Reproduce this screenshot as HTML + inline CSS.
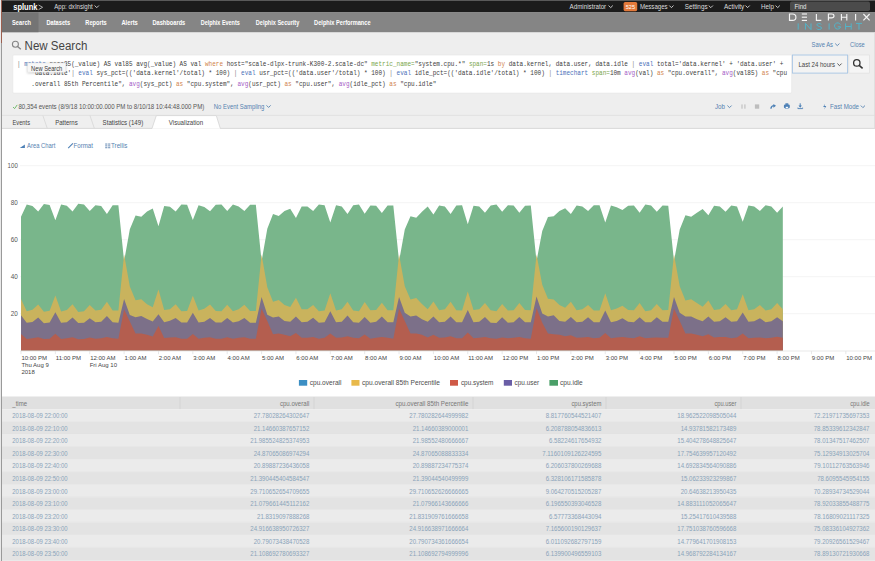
<!DOCTYPE html><html><head><meta charset="utf-8"><title>New Search | Splunk</title><style>html,body{margin:0;padding:0;background:#fff;overflow:hidden}svg{display:block}</style></head><body>
<svg width="875" height="561" viewBox="0 0 875 561" font-family='"Liberation Sans", sans-serif'>
<rect x="0.00" y="0.00" width="875.00" height="561.00" fill="#ffffff" />
<rect x="0.00" y="0.00" width="875.00" height="12.50" fill="#1c1c1c" />
<rect x="0.00" y="0.00" width="875.00" height="1.00" fill="#5a5a5a" />
<text x="13.20" y="9.90" font-size="8.6" fill="#ffffff" font-weight="bold" textLength="24.30" lengthAdjust="spacingAndGlyphs" >splunk</text>
<polyline points="38.6,5.0 42.6,7.3 38.6,9.6" fill="none" stroke="#bdbdbd" stroke-width="0.9"/>
<text x="54.30" y="8.70" font-size="6.6" fill="#dedede" textLength="38.50" lengthAdjust="spacingAndGlyphs" >App: dxInsight</text>
<polyline points="94.60,5.52 96.75,7.68 98.90,5.52" fill="none" stroke="#dedede" stroke-width="0.9"/>
<text x="569.60" y="8.70" font-size="6.6" fill="#dedede" textLength="36.60" lengthAdjust="spacingAndGlyphs" >Administrator</text>
<polyline points="608.60,5.55 610.70,7.65 612.80,5.55" fill="none" stroke="#dedede" stroke-width="0.9"/>
<rect x="623.6" y="1.9" width="13.6" height="9.3" rx="1.6" fill="#e3793a"/>
<text x="630.40" y="8.70" font-size="6.0" fill="#ffffff" text-anchor="middle" textLength="9.20" lengthAdjust="spacingAndGlyphs" >525</text>
<text x="639.90" y="8.70" font-size="6.6" fill="#dedede" textLength="27.70" lengthAdjust="spacingAndGlyphs" >Messages</text>
<polyline points="669.30,5.55 671.40,7.65 673.50,5.55" fill="none" stroke="#dedede" stroke-width="0.9"/>
<text x="684.70" y="8.70" font-size="6.6" fill="#dedede" textLength="22.90" lengthAdjust="spacingAndGlyphs" >Settings</text>
<polyline points="708.70,5.55 710.80,7.65 712.90,5.55" fill="none" stroke="#dedede" stroke-width="0.9"/>
<text x="724.10" y="8.70" font-size="6.6" fill="#dedede" textLength="20.20" lengthAdjust="spacingAndGlyphs" >Activity</text>
<polyline points="745.50,5.55 747.60,7.65 749.70,5.55" fill="none" stroke="#dedede" stroke-width="0.9"/>
<text x="761.00" y="8.70" font-size="6.6" fill="#dedede" textLength="12.90" lengthAdjust="spacingAndGlyphs" >Help</text>
<polyline points="775.60,5.55 777.70,7.65 779.80,5.55" fill="none" stroke="#dedede" stroke-width="0.9"/>
<rect x="790" y="1.6" width="80" height="9.4" rx="1.8" fill="#4b4b4b"/>
<text x="794.50" y="8.60" font-size="6.4" fill="#e6e6e6" textLength="12.00" lengthAdjust="spacingAndGlyphs" >Find</text>
<rect x="0.00" y="12.50" width="875.00" height="20.00" fill="#858585" />
<rect x="2.00" y="12.50" width="36.50" height="20.00" fill="#747474" />
<text x="12.10" y="25.10" font-size="6.6" fill="#ffffff" font-weight="bold" textLength="18.90" lengthAdjust="spacingAndGlyphs" >Search</text>
<text x="46.40" y="25.10" font-size="6.6" fill="#ffffff" font-weight="bold" textLength="23.80" lengthAdjust="spacingAndGlyphs" >Datasets</text>
<text x="85.30" y="25.10" font-size="6.6" fill="#ffffff" font-weight="bold" textLength="21.40" lengthAdjust="spacingAndGlyphs" >Reports</text>
<text x="121.40" y="25.10" font-size="6.6" fill="#ffffff" font-weight="bold" textLength="16.40" lengthAdjust="spacingAndGlyphs" >Alerts</text>
<text x="152.40" y="25.10" font-size="6.6" fill="#ffffff" font-weight="bold" textLength="32.90" lengthAdjust="spacingAndGlyphs" >Dashboards</text>
<text x="200.70" y="25.10" font-size="6.6" fill="#ffffff" font-weight="bold" textLength="39.10" lengthAdjust="spacingAndGlyphs" >Delphix Events</text>
<text x="255.80" y="25.10" font-size="6.6" fill="#ffffff" font-weight="bold" textLength="43.50" lengthAdjust="spacingAndGlyphs" >Delphix Security</text>
<text x="314.10" y="25.10" font-size="6.6" fill="#ffffff" font-weight="bold" textLength="56.50" lengthAdjust="spacingAndGlyphs" >Delphix Performance</text>
<g fill="none" stroke="#f4f4f4" stroke-width="1.15" stroke-linecap="butt">
<path d="M789.5 14.0 V20.4 H792.5 A3.4 3.2 0 0 0 792.5 14.0 Z"/>
<path d="M801.8 14.00 H807.0"/>
<path d="M801.8 17.20 H807.0"/>
<path d="M801.8 20.40 H807.0"/>
<path d="M816.4 14.0 V20.4 H821.3"/>
<path d="M828.4 20.4 V14.0 H831.5 A2.5 1.9 0 0 1 831.5 17.80 H828.4"/>
<path d="M841.4 14.0 V20.4 M846.8 14.0 V20.4 M841.4 17.20 H846.8"/>
<path d="M855.6 14.0 V20.4"/>
<path d="M863.4 14.0 L869.6 20.4 M869.6 14.0 L863.4 20.4"/>
</g>
<g fill="none" stroke="#52b4c9" stroke-width="1.0">
<path d="M798.2 23.4 V29.6"/>
<path d="M805.4 29.6 V23.4 L811.0 29.6 V23.4"/>
<path d="M821.4 24.50 C820.6 23.10 816.6 23.10 816.8 25.00 C817.0 26.60 821.8 26.20 821.6 28.10 C821.4 30.00 817.2 30.00 816.6 28.60"/>
<path d="M829.1 23.4 V29.6"/>
<path d="M840.4 24.60 A3.1 3.1 0 1 0 840.6 26.80 H837.8"/>
<path d="M845.6 23.4 V29.6 M851.2 23.4 V29.6 M845.6 26.50 H851.2"/>
<path d="M856.0 23.4 H862.0 M859.0 23.4 V29.6"/>
</g>
<rect x="2.00" y="32.50" width="873.00" height="82.70" fill="#eeeeee" />
<circle cx="15.4" cy="44.2" r="3.0" fill="none" stroke="#858585" stroke-width="1.1"/>
<line x1="17.60" y1="46.50" x2="20.80" y2="49.30" stroke="#858585" stroke-width="1.3" />
<text x="24.60" y="49.80" font-size="12" fill="#444444" textLength="62.80" lengthAdjust="spacingAndGlyphs" >New Search</text>
<text x="811.60" y="46.90" font-size="6.6" fill="#5582b0" textLength="21.40" lengthAdjust="spacingAndGlyphs" >Save As</text>
<polyline points="835.20,43.55 837.30,45.65 839.40,43.55" fill="none" stroke="#5582b0" stroke-width="0.9"/>
<text x="850.10" y="46.90" font-size="6.6" fill="#5582b0" textLength="14.60" lengthAdjust="spacingAndGlyphs" >Close</text>
<rect x="12.8" y="55.0" width="778.9" height="38.1" rx="1" fill="#ffffff" stroke="#e4e4e4" stroke-width="0.6"/>
<text x="16.90" y="65.80" font-size="7.000" font-family='"Liberation Mono", monospace' textLength="766.59" lengthAdjust="spacingAndGlyphs" xml:space="preserve"><tspan fill="#808080">| </tspan><tspan fill="#4b6fb8">mstats</tspan><tspan fill="#3c3c3c"> perc85</tspan><tspan fill="#3c3c3c">(_value) AS val85 avg(_value) AS val </tspan><tspan fill="#d0834d">where</tspan><tspan fill="#3c3c3c"> host="scale-dlpx-trunk-K300-2.scale-dc" </tspan><tspan fill="#7aa64a">metric_name=</tspan><tspan fill="#3c3c3c">"system.cpu.*" </tspan><tspan fill="#7aa64a">span=</tspan><tspan fill="#3c3c3c">1s </tspan><tspan fill="#d0834d">by</tspan><tspan fill="#3c3c3c"> data.kernel, data.user, data.idle </tspan><tspan fill="#808080">| </tspan><tspan fill="#4b6fb8">eval</tspan><tspan fill="#3c3c3c"> total='data.kernel' + 'data.user' +</tspan></text>
<text x="31.36" y="75.40" font-size="7.000" font-family='"Liberation Mono", monospace' textLength="755.74" lengthAdjust="spacingAndGlyphs" xml:space="preserve"><tspan fill="#3c3c3c">'data.idle'</tspan><tspan fill="#808080">| </tspan><tspan fill="#4b6fb8">eval</tspan><tspan fill="#3c3c3c"> sys_pct=(('data.kernel'/total) * 100) </tspan><tspan fill="#808080">| </tspan><tspan fill="#4b6fb8">eval</tspan><tspan fill="#3c3c3c"> usr_pct=(('data.user'/total) * 100) </tspan><tspan fill="#808080">| </tspan><tspan fill="#4b6fb8">eval</tspan><tspan fill="#3c3c3c"> idle_pct=(('data.idle'/total) * 100) </tspan><tspan fill="#808080">| </tspan><tspan fill="#4b6fb8">timechart</tspan><tspan fill="#3c3c3c"> </tspan><tspan fill="#7aa64a">span=</tspan><tspan fill="#3c3c3c">10m </tspan><tspan fill="#a45cc6">avg</tspan><tspan fill="#3c3c3c">(val) </tspan><tspan fill="#d0834d">as</tspan><tspan fill="#3c3c3c"> "cpu.overall", </tspan><tspan fill="#a45cc6">avg</tspan><tspan fill="#3c3c3c">(val85) </tspan><tspan fill="#d0834d">as</tspan><tspan fill="#3c3c3c"> "cpu</tspan></text>
<text x="31.36" y="85.50" font-size="7.000" font-family='"Liberation Mono", monospace' textLength="404.99" lengthAdjust="spacingAndGlyphs" xml:space="preserve"><tspan fill="#3c3c3c">.overall 85th Percentile", </tspan><tspan fill="#a45cc6">avg</tspan><tspan fill="#3c3c3c">(sys_pct) </tspan><tspan fill="#d0834d">as</tspan><tspan fill="#3c3c3c"> "cpu.system", </tspan><tspan fill="#a45cc6">avg</tspan><tspan fill="#3c3c3c">(usr_pct) </tspan><tspan fill="#d0834d">as</tspan><tspan fill="#3c3c3c"> "cpu.user", </tspan><tspan fill="#a45cc6">avg</tspan><tspan fill="#3c3c3c">(idle_pct) </tspan><tspan fill="#d0834d">as</tspan><tspan fill="#3c3c3c"> "cpu.idle"</tspan></text>
<defs><filter id="sh" x="-20%" y="-40%" width="140%" height="180%"><feDropShadow dx="0" dy="0.6" stdDeviation="0.9" flood-color="#000" flood-opacity="0.25"/></filter></defs>
<rect x="27.7" y="63.0" width="38.1" height="9.1" fill="#f7f7f7" stroke="#dedede" stroke-width="0.4" filter="url(#sh)"/>
<text x="31.10" y="70.60" font-size="6.3" fill="#383838" textLength="31.20" lengthAdjust="spacingAndGlyphs" >New Search</text>
<rect x="792.4" y="55.0" width="55.2" height="18.1" fill="#f3f3f3" stroke="#a7c5e4" stroke-width="0.9"/>
<text x="798.40" y="67.00" font-size="7.0" fill="#444444" textLength="36.70" lengthAdjust="spacingAndGlyphs" >Last 24 hours</text>
<polyline points="837.40,63.55 839.50,65.65 841.60,63.55" fill="none" stroke="#444444" stroke-width="0.9"/>
<rect x="848.9" y="55.0" width="20.6" height="18.1" fill="#f5f5f5" stroke="#dddddd" stroke-width="0.6"/>
<circle cx="856.8" cy="62.9" r="3.2" fill="none" stroke="#333333" stroke-width="1.3"/>
<line x1="859.20" y1="65.30" x2="862.60" y2="68.40" stroke="#333333" stroke-width="1.6" />
<polyline points="13.0,107.0 14.6,108.6 17.2,104.9" fill="none" stroke="#65b560" stroke-width="0.9"/>
<text x="18.40" y="109.10" font-size="6.9" fill="#555555" textLength="185.90" lengthAdjust="spacingAndGlyphs" >80,354 events (8/9/18 10:00:00.000 PM to 8/10/18 10:44:48.000 PM)</text>
<text x="213.80" y="109.10" font-size="6.9" fill="#5582b0" textLength="50.60" lengthAdjust="spacingAndGlyphs" >No Event Sampling</text>
<polyline points="266.50,105.35 268.60,107.45 270.70,105.35" fill="none" stroke="#5582b0" stroke-width="0.9"/>
<text x="715.00" y="108.60" font-size="6.5" fill="#5582b0" textLength="10.00" lengthAdjust="spacingAndGlyphs" >Job</text>
<polyline points="727.40,105.55 729.50,107.65 731.60,105.55" fill="none" stroke="#5582b0" stroke-width="0.9"/>
<rect x="741.30" y="104.40" width="1.40" height="4.30" fill="#c8c8c8" />
<rect x="744.20" y="104.40" width="1.40" height="4.30" fill="#c8c8c8" />
<rect x="754.90" y="104.40" width="4.30" height="4.30" fill="#bdbdbd" />
<path d="M770.9 108.7 C771.1 106.6 772.4 105.7 774.2 105.7" fill="none" stroke="#4d80b6" stroke-width="1.3"/>
<polygon points="773.4,103.9 776.0,105.8 773.4,107.7" fill="#4d80b6"/>
<rect x="785.4" y="103.3" width="2.9" height="1.6" fill="#4d80b6"/>
<rect x="783.9" y="104.6" width="5.9" height="3.6" rx="1.2" fill="#4d80b6"/>
<rect x="785.5" y="106.6" width="2.7" height="2.1" fill="#ffffff" stroke="#4d80b6" stroke-width="0.5"/>
<path d="M800.2 103.3 V106.4" stroke="#4d80b6" stroke-width="1.0"/>
<polygon points="798.5,105.5 801.9,105.5 800.2,107.7" fill="#4d80b6"/>
<path d="M797.9 107.6 V108.6 H802.6 V107.6" fill="none" stroke="#4d80b6" stroke-width="0.9"/>
<path d="M824.9 103.8 L823.2 107.0 H825.0 L824.2 109.6 L826.3 106.0 H824.5 Z" fill="#4d80b6"/>
<text x="830.00" y="108.60" font-size="6.5" fill="#5582b0" textLength="29.00" lengthAdjust="spacingAndGlyphs" >Fast Mode</text>
<polyline points="860.80,105.55 862.90,107.65 865.00,105.55" fill="none" stroke="#5582b0" stroke-width="0.9"/>
<rect x="2.00" y="115.60" width="873.00" height="12.60" fill="#efefef" />
<line x1="2.00" y1="115.40" x2="875.00" y2="115.40" stroke="#dadada" stroke-width="0.8" />
<line x1="2.00" y1="128.40" x2="875.00" y2="128.40" stroke="#cfcfcf" stroke-width="0.8" />
<polygon points="156.3,115.6 216.3,115.6 220.3,128.8 152.0,128.8" fill="#ffffff"/>
<polyline points="152.0,128.4 156.3,115.6 216.3,115.6 220.3,128.4" fill="none" stroke="#d0d0d0" stroke-width="0.7"/>
<line x1="42.90" y1="115.60" x2="47.20" y2="128.20" stroke="#d3d3d3" stroke-width="0.7" />
<line x1="90.00" y1="115.60" x2="94.30" y2="128.20" stroke="#d3d3d3" stroke-width="0.7" />
<text x="12.50" y="124.90" font-size="6.6" fill="#444444" textLength="17.50" lengthAdjust="spacingAndGlyphs" >Events</text>
<text x="55.20" y="124.90" font-size="6.6" fill="#444444" textLength="22.50" lengthAdjust="spacingAndGlyphs" >Patterns</text>
<text x="102.60" y="124.90" font-size="6.6" fill="#444444" textLength="40.60" lengthAdjust="spacingAndGlyphs" >Statistics (149)</text>
<text x="168.80" y="124.90" font-size="6.6" fill="#444444" textLength="34.30" lengthAdjust="spacingAndGlyphs" >Visualization</text>
<path d="M19.8 148.0 L24.9 144.6 V148.0 Z" fill="#4d80b6"/>
<text x="27.10" y="148.00" font-size="6.6" fill="#5582b0" textLength="28.20" lengthAdjust="spacingAndGlyphs" >Area Chart</text>
<path d="M68.2 148.2 L72.9 143.4" stroke="#4d80b6" stroke-width="1.1"/>
<text x="73.60" y="148.00" font-size="6.6" fill="#5582b0" textLength="19.30" lengthAdjust="spacingAndGlyphs" >Format</text>
<g fill="#8aa6c6"><rect x="105.2" y="143.4" width="2.2" height="1.3"/><rect x="108.1" y="143.4" width="2.2" height="1.3"/><rect x="105.2" y="145.2" width="2.2" height="1.3"/><rect x="108.1" y="145.2" width="2.2" height="1.3"/><rect x="105.2" y="147.0" width="2.2" height="1.3"/><rect x="108.1" y="147.0" width="2.2" height="1.3"/></g>
<text x="111.00" y="148.00" font-size="6.6" fill="#5582b0" textLength="16.40" lengthAdjust="spacingAndGlyphs" >Trellis</text>
<line x1="20.00" y1="165.70" x2="875.00" y2="165.70" stroke="#f0f0f0" stroke-width="0.8" />
<line x1="20.00" y1="202.70" x2="875.00" y2="202.70" stroke="#f0f0f0" stroke-width="0.8" />
<line x1="20.00" y1="239.70" x2="875.00" y2="239.70" stroke="#f0f0f0" stroke-width="0.8" />
<line x1="20.00" y1="276.70" x2="875.00" y2="276.70" stroke="#f0f0f0" stroke-width="0.8" />
<line x1="20.00" y1="313.70" x2="875.00" y2="313.70" stroke="#f0f0f0" stroke-width="0.8" />
<text x="17.80" y="167.90" font-size="6.7" fill="#555555" text-anchor="end" textLength="10.20" lengthAdjust="spacingAndGlyphs" >100</text>
<text x="17.80" y="204.90" font-size="6.7" fill="#555555" text-anchor="end" textLength="7.00" lengthAdjust="spacingAndGlyphs" >80</text>
<text x="17.80" y="241.90" font-size="6.7" fill="#555555" text-anchor="end" textLength="7.10" lengthAdjust="spacingAndGlyphs" >60</text>
<text x="17.80" y="278.90" font-size="6.7" fill="#555555" text-anchor="end" textLength="7.10" lengthAdjust="spacingAndGlyphs" >40</text>
<text x="17.80" y="315.90" font-size="6.7" fill="#555555" text-anchor="end" textLength="7.10" lengthAdjust="spacingAndGlyphs" >20</text>
<polygon points="21.00,350.4 21.00,216.79 26.73,204.53 32.46,206.08 38.18,211.41 43.91,204.06 49.64,204.97 55.37,220.36 61.10,204.40 66.82,205.79 72.55,211.50 78.28,203.86 84.01,204.45 89.74,210.91 95.46,205.17 101.19,206.10 106.92,214.05 112.65,205.36 118.38,205.36 124.10,261.23 129.83,229.22 135.56,215.53 141.29,216.64 147.02,211.46 152.74,208.50 158.47,226.26 164.20,205.91 169.93,206.65 175.66,211.46 181.38,204.43 187.11,204.80 192.84,219.97 198.57,205.36 204.30,207.02 210.02,211.28 215.75,204.80 221.48,204.43 227.21,211.09 232.94,204.43 238.66,206.47 244.39,211.09 250.12,204.80 255.85,204.80 261.58,261.23 267.30,228.67 273.03,214.05 278.76,215.90 284.49,210.91 290.22,208.87 295.94,217.94 301.67,206.47 307.40,206.47 313.13,210.91 318.86,204.62 324.58,205.17 330.31,222.56 336.04,205.17 341.77,206.47 347.50,214.05 353.22,205.36 358.95,204.62 364.68,213.68 370.41,205.54 376.14,205.73 381.86,212.94 387.59,205.54 393.32,205.54 399.05,261.23 404.78,229.59 410.50,216.27 416.23,217.75 421.96,211.83 427.69,206.47 433.42,214.42 439.14,205.54 444.87,206.47 450.60,214.05 456.33,205.54 462.06,205.17 467.78,224.23 473.51,205.73 479.24,206.47 484.97,212.76 490.70,205.54 496.42,204.62 502.15,211.83 507.88,205.17 513.61,205.54 519.34,212.76 525.06,205.73 530.79,205.54 536.52,261.23 542.25,231.07 547.98,217.01 553.70,216.27 559.43,210.91 565.16,208.13 570.89,214.05 576.62,205.54 582.34,206.47 588.07,210.91 593.80,205.17 599.53,205.17 605.26,222.56 610.98,205.54 616.71,207.21 622.44,209.98 628.17,205.73 633.90,205.54 639.62,212.76 645.35,204.62 651.08,205.54 656.81,211.83 662.54,205.54 668.26,205.73 673.99,261.23 679.72,229.59 685.45,215.35 691.18,216.64 696.90,212.76 702.63,209.06 708.36,215.35 714.09,205.73 719.82,206.47 725.54,211.83 731.27,205.54 737.00,206.47 742.73,221.64 748.46,205.54 754.18,206.47 759.91,210.91 765.64,205.17 771.37,206.47 777.10,212.76 782.82,206.47 782.82,350.4" fill="#79b68b"/>
<polygon points="21.00,350.4 21.00,299.01 26.73,311.27 32.46,309.72 38.18,304.39 43.91,311.73 49.64,310.83 55.37,295.44 61.10,311.40 66.82,310.01 72.55,304.30 78.28,311.94 84.01,311.35 89.74,304.89 95.46,310.62 101.19,309.70 106.92,301.75 112.65,310.44 118.38,310.44 124.10,254.57 129.83,286.57 135.56,300.26 141.29,299.15 147.02,304.33 152.74,307.29 158.47,289.53 164.20,309.88 169.93,309.14 175.66,304.33 181.38,311.36 187.11,311.00 192.84,295.82 198.57,310.44 204.30,308.77 210.02,304.52 215.75,311.00 221.48,311.36 227.21,304.70 232.94,311.36 238.66,309.33 244.39,304.70 250.12,311.00 255.85,311.00 261.58,254.57 267.30,287.13 273.03,301.75 278.76,299.89 284.49,304.89 290.22,306.92 295.94,297.86 301.67,309.33 307.40,309.33 313.13,304.89 318.86,311.18 324.58,310.62 330.31,293.23 336.04,310.62 341.77,309.33 347.50,301.75 353.22,310.44 358.95,311.18 364.68,302.11 370.41,310.25 376.14,310.07 381.86,302.85 387.59,310.25 393.32,310.25 399.05,254.57 404.78,286.20 410.50,299.52 416.23,298.04 421.96,303.96 427.69,309.33 433.42,301.38 439.14,310.25 444.87,309.33 450.60,301.75 456.33,310.25 462.06,310.62 467.78,291.57 473.51,310.07 479.24,309.33 484.97,303.04 490.70,310.25 496.42,311.18 502.15,303.96 507.88,310.62 513.61,310.25 519.34,303.04 525.06,310.07 530.79,310.25 536.52,254.57 542.25,284.72 547.98,298.78 553.70,299.52 559.43,304.89 565.16,307.66 570.89,301.75 576.62,310.25 582.34,309.33 588.07,304.89 593.80,310.62 599.53,310.62 605.26,293.23 610.98,310.25 616.71,308.59 622.44,305.81 628.17,310.07 633.90,310.25 639.62,303.04 645.35,311.18 651.08,310.25 656.81,303.96 662.54,310.25 668.26,310.07 673.99,254.57 679.72,286.20 685.45,300.45 691.18,299.15 696.90,303.04 702.63,306.74 708.36,300.45 714.09,310.07 719.82,309.33 725.54,303.96 731.27,310.25 737.00,309.33 742.73,294.16 748.46,310.25 754.18,309.33 759.91,304.89 765.64,310.62 771.37,309.33 777.10,303.04 782.82,309.33 782.82,350.4" fill="#c9b35d"/>
<polygon points="21.00,350.4 21.00,315.32 26.73,322.76 32.46,321.91 38.18,317.56 43.91,323.22 49.64,322.54 55.37,312.20 61.10,322.87 66.82,322.19 72.55,317.56 78.28,323.06 84.01,322.71 89.74,318.21 95.46,322.28 101.19,321.72 106.92,315.99 112.65,322.28 118.38,322.65 124.10,298.97 129.83,315.06 135.56,317.28 141.29,315.99 147.02,318.95 152.74,321.54 158.47,314.32 164.20,322.28 169.93,320.80 175.66,318.02 181.38,322.46 187.11,322.46 192.84,312.84 198.57,322.46 204.30,321.72 210.02,318.02 215.75,322.46 221.48,322.46 227.21,318.02 232.94,322.46 238.66,321.35 244.39,318.02 250.12,322.83 255.85,322.83 261.58,296.93 267.30,314.69 273.03,317.47 278.76,316.54 284.49,320.98 290.22,321.72 295.94,316.54 301.67,322.28 307.40,321.72 313.13,317.65 318.86,322.65 324.58,322.28 330.31,311.18 336.04,322.28 341.77,321.72 347.50,315.62 353.22,322.28 358.95,322.65 364.68,316.91 370.41,322.65 376.14,321.72 381.86,316.54 387.59,322.28 393.32,322.28 399.05,296.93 404.78,312.84 410.50,316.54 416.23,315.62 421.96,319.13 427.69,321.72 433.42,316.54 439.14,322.28 444.87,321.72 450.60,316.54 456.33,322.28 462.06,322.28 467.78,310.07 473.51,322.28 479.24,321.72 484.97,316.91 490.70,322.65 496.42,323.02 502.15,317.28 507.88,322.65 513.61,322.28 519.34,316.91 525.06,322.28 530.79,322.28 536.52,296.38 542.25,313.40 547.98,316.54 553.70,315.25 559.43,320.98 565.16,321.72 570.89,316.91 576.62,322.28 582.34,321.72 588.07,317.28 593.80,322.28 599.53,322.28 605.26,310.62 610.98,322.28 616.71,320.98 622.44,318.21 628.17,321.72 633.90,322.28 639.62,317.28 645.35,322.28 651.08,322.28 656.81,317.28 662.54,321.72 668.26,321.72 673.99,296.93 679.72,312.84 685.45,316.54 691.18,316.54 696.90,319.13 702.63,321.35 708.36,316.54 714.09,321.72 719.82,321.35 725.54,317.28 731.27,321.72 737.00,321.35 742.73,312.47 748.46,321.72 754.18,321.35 759.91,318.21 765.64,322.28 771.37,321.35 777.10,317.28 782.82,321.35 782.82,350.4" fill="#7c7089"/>
<polygon points="21.00,350.4 21.00,334.08 26.73,338.91 32.46,338.23 38.18,337.23 43.91,338.91 49.64,338.69 55.37,333.64 61.10,338.93 66.82,338.23 72.55,337.14 78.28,339.28 84.01,339.04 89.74,337.45 95.46,338.75 101.19,338.19 106.92,337.08 112.65,338.19 118.38,338.75 124.10,309.33 129.83,321.54 135.56,333.38 141.29,333.38 147.02,334.67 152.74,336.52 158.47,325.98 164.20,338.00 169.93,337.45 175.66,337.26 181.38,338.75 187.11,338.75 192.84,334.12 198.57,338.75 204.30,337.82 210.02,337.26 215.75,338.75 221.48,338.75 227.21,337.26 232.94,338.75 238.66,337.82 244.39,337.26 250.12,338.75 255.85,338.75 261.58,308.59 267.30,320.98 273.03,334.30 278.76,333.38 284.49,334.86 290.22,336.15 295.94,333.01 301.67,337.82 307.40,337.82 313.13,337.08 318.86,338.75 324.58,337.82 330.31,333.38 336.04,337.82 341.77,337.45 347.50,336.15 353.22,337.82 358.95,338.19 364.68,334.49 370.41,338.75 376.14,337.82 381.86,337.08 387.59,337.82 393.32,338.75 399.05,308.59 404.78,320.98 410.50,333.38 416.23,333.38 421.96,334.86 427.69,337.45 433.42,334.86 439.14,337.82 444.87,337.45 450.60,336.15 456.33,338.19 462.06,338.19 467.78,332.45 473.51,338.19 479.24,337.82 484.97,337.08 490.70,338.19 496.42,338.75 502.15,337.45 507.88,338.19 513.61,337.82 519.34,337.08 525.06,338.19 530.79,338.75 536.52,308.03 542.25,322.65 547.98,333.38 553.70,334.30 559.43,334.86 565.16,336.15 570.89,335.23 576.62,337.82 582.34,337.45 588.07,337.08 593.80,338.19 599.53,337.82 605.26,333.01 610.98,338.19 616.71,337.45 622.44,337.08 628.17,337.82 633.90,338.19 639.62,336.15 645.35,338.19 651.08,337.82 656.81,337.45 662.54,337.82 668.26,337.82 673.99,308.40 679.72,320.98 685.45,333.38 691.18,333.38 696.90,334.86 702.63,336.15 708.36,334.30 714.09,337.45 719.82,337.08 725.54,337.08 731.27,338.19 737.00,337.45 742.73,333.38 748.46,338.19 754.18,337.82 759.91,337.45 765.64,338.19 771.37,337.82 777.10,336.71 782.82,337.82 782.82,350.4" fill="#b45e4f"/>
<line x1="20.00" y1="351.00" x2="875.00" y2="351.00" stroke="#e3e3e3" stroke-width="0.8" />
<line x1="21.00" y1="351.20" x2="21.00" y2="354.20" stroke="#d8d8d8" stroke-width="0.6" />
<text x="21.40" y="360.40" font-size="6.0" fill="#444444" >10:00 PM</text>
<line x1="55.37" y1="351.20" x2="55.37" y2="354.20" stroke="#d8d8d8" stroke-width="0.6" />
<text x="55.77" y="360.40" font-size="6.0" fill="#444444" >11:00 PM</text>
<line x1="89.74" y1="351.20" x2="89.74" y2="354.20" stroke="#d8d8d8" stroke-width="0.6" />
<text x="90.14" y="360.40" font-size="6.0" fill="#444444" >12:00 AM</text>
<line x1="124.10" y1="351.20" x2="124.10" y2="354.20" stroke="#d8d8d8" stroke-width="0.6" />
<text x="124.50" y="360.40" font-size="6.0" fill="#444444" >1:00 AM</text>
<line x1="158.47" y1="351.20" x2="158.47" y2="354.20" stroke="#d8d8d8" stroke-width="0.6" />
<text x="158.87" y="360.40" font-size="6.0" fill="#444444" >2:00 AM</text>
<line x1="192.84" y1="351.20" x2="192.84" y2="354.20" stroke="#d8d8d8" stroke-width="0.6" />
<text x="193.24" y="360.40" font-size="6.0" fill="#444444" >3:00 AM</text>
<line x1="227.21" y1="351.20" x2="227.21" y2="354.20" stroke="#d8d8d8" stroke-width="0.6" />
<text x="227.61" y="360.40" font-size="6.0" fill="#444444" >4:00 AM</text>
<line x1="261.58" y1="351.20" x2="261.58" y2="354.20" stroke="#d8d8d8" stroke-width="0.6" />
<text x="261.98" y="360.40" font-size="6.0" fill="#444444" >5:00 AM</text>
<line x1="295.94" y1="351.20" x2="295.94" y2="354.20" stroke="#d8d8d8" stroke-width="0.6" />
<text x="296.34" y="360.40" font-size="6.0" fill="#444444" >6:00 AM</text>
<line x1="330.31" y1="351.20" x2="330.31" y2="354.20" stroke="#d8d8d8" stroke-width="0.6" />
<text x="330.71" y="360.40" font-size="6.0" fill="#444444" >7:00 AM</text>
<line x1="364.68" y1="351.20" x2="364.68" y2="354.20" stroke="#d8d8d8" stroke-width="0.6" />
<text x="365.08" y="360.40" font-size="6.0" fill="#444444" >8:00 AM</text>
<line x1="399.05" y1="351.20" x2="399.05" y2="354.20" stroke="#d8d8d8" stroke-width="0.6" />
<text x="399.45" y="360.40" font-size="6.0" fill="#444444" >9:00 AM</text>
<line x1="433.42" y1="351.20" x2="433.42" y2="354.20" stroke="#d8d8d8" stroke-width="0.6" />
<text x="433.82" y="360.40" font-size="6.0" fill="#444444" >10:00 AM</text>
<line x1="467.78" y1="351.20" x2="467.78" y2="354.20" stroke="#d8d8d8" stroke-width="0.6" />
<text x="468.18" y="360.40" font-size="6.0" fill="#444444" >11:00 AM</text>
<line x1="502.15" y1="351.20" x2="502.15" y2="354.20" stroke="#d8d8d8" stroke-width="0.6" />
<text x="502.55" y="360.40" font-size="6.0" fill="#444444" >12:00 PM</text>
<line x1="536.52" y1="351.20" x2="536.52" y2="354.20" stroke="#d8d8d8" stroke-width="0.6" />
<text x="536.92" y="360.40" font-size="6.0" fill="#444444" >1:00 PM</text>
<line x1="570.89" y1="351.20" x2="570.89" y2="354.20" stroke="#d8d8d8" stroke-width="0.6" />
<text x="571.29" y="360.40" font-size="6.0" fill="#444444" >2:00 PM</text>
<line x1="605.26" y1="351.20" x2="605.26" y2="354.20" stroke="#d8d8d8" stroke-width="0.6" />
<text x="605.66" y="360.40" font-size="6.0" fill="#444444" >3:00 PM</text>
<line x1="639.62" y1="351.20" x2="639.62" y2="354.20" stroke="#d8d8d8" stroke-width="0.6" />
<text x="640.02" y="360.40" font-size="6.0" fill="#444444" >4:00 PM</text>
<line x1="673.99" y1="351.20" x2="673.99" y2="354.20" stroke="#d8d8d8" stroke-width="0.6" />
<text x="674.39" y="360.40" font-size="6.0" fill="#444444" >5:00 PM</text>
<line x1="708.36" y1="351.20" x2="708.36" y2="354.20" stroke="#d8d8d8" stroke-width="0.6" />
<text x="708.76" y="360.40" font-size="6.0" fill="#444444" >6:00 PM</text>
<line x1="742.73" y1="351.20" x2="742.73" y2="354.20" stroke="#d8d8d8" stroke-width="0.6" />
<text x="743.13" y="360.40" font-size="6.0" fill="#444444" >7:00 PM</text>
<line x1="777.10" y1="351.20" x2="777.10" y2="354.20" stroke="#d8d8d8" stroke-width="0.6" />
<text x="777.50" y="360.40" font-size="6.0" fill="#444444" >8:00 PM</text>
<line x1="811.46" y1="351.20" x2="811.46" y2="354.20" stroke="#d8d8d8" stroke-width="0.6" />
<text x="811.86" y="360.40" font-size="6.0" fill="#444444" >9:00 PM</text>
<line x1="845.83" y1="351.20" x2="845.83" y2="354.20" stroke="#d8d8d8" stroke-width="0.6" />
<text x="846.23" y="360.40" font-size="6.0" fill="#444444" >10:00 PM</text>
<text x="21.40" y="366.70" font-size="6.0" fill="#444444" >Thu Aug 9</text>
<text x="21.40" y="374.00" font-size="6.0" fill="#444444" >2018</text>
<text x="89.70" y="366.70" font-size="6.0" fill="#444444" >Fri Aug 10</text>
<rect x="298.90" y="380.00" width="8.30" height="5.70" fill="#3c8fc4" />
<text x="309.70" y="385.00" font-size="6.3" fill="#4d4d4d" textLength="31.80" lengthAdjust="spacingAndGlyphs" >cpu.overall</text>
<rect x="351.40" y="380.00" width="8.10" height="5.70" fill="#e8b94b" />
<text x="362.00" y="385.00" font-size="6.3" fill="#4d4d4d" textLength="78.00" lengthAdjust="spacingAndGlyphs" >cpu.overall 85th Percentile</text>
<rect x="450.00" y="380.00" width="8.00" height="5.70" fill="#cf5a47" />
<text x="460.90" y="385.00" font-size="6.3" fill="#4d4d4d" textLength="32.60" lengthAdjust="spacingAndGlyphs" >cpu.system</text>
<rect x="503.80" y="380.00" width="8.20" height="5.70" fill="#6a5ea6" />
<text x="514.60" y="385.00" font-size="6.3" fill="#4d4d4d" textLength="24.50" lengthAdjust="spacingAndGlyphs" >cpu.user</text>
<rect x="549.40" y="380.00" width="8.60" height="5.70" fill="#4a9f68" />
<text x="560.00" y="385.00" font-size="6.3" fill="#4d4d4d" textLength="22.70" lengthAdjust="spacingAndGlyphs" >cpu.idle</text>
<rect x="2.00" y="396.80" width="873.00" height="12.50" fill="#e0e0e0" />
<line x1="2.00" y1="396.90" x2="875.00" y2="396.90" stroke="#dedede" stroke-width="0.6" />
<line x1="180.00" y1="397.00" x2="180.00" y2="409.30" stroke="#cfcfcf" stroke-width="0.7" />
<line x1="314.00" y1="397.00" x2="314.00" y2="409.30" stroke="#cfcfcf" stroke-width="0.7" />
<line x1="473.00" y1="397.00" x2="473.00" y2="409.30" stroke="#cfcfcf" stroke-width="0.7" />
<line x1="606.00" y1="397.00" x2="606.00" y2="409.30" stroke="#cfcfcf" stroke-width="0.7" />
<line x1="741.00" y1="397.00" x2="741.00" y2="409.30" stroke="#cfcfcf" stroke-width="0.7" />
<text x="12.30" y="406.00" font-size="6.4" fill="#777777" textLength="14.70" lengthAdjust="spacingAndGlyphs" >_time</text>
<text x="309.40" y="406.00" font-size="6.4" fill="#777777" text-anchor="end" textLength="29.50" lengthAdjust="spacingAndGlyphs" >cpu.overall</text>
<text x="468.40" y="406.00" font-size="6.4" fill="#777777" text-anchor="end" textLength="73.00" lengthAdjust="spacingAndGlyphs" >cpu.overall 85th Percentile</text>
<text x="601.40" y="406.00" font-size="6.4" fill="#777777" text-anchor="end" textLength="30.00" lengthAdjust="spacingAndGlyphs" >cpu.system</text>
<text x="736.40" y="406.00" font-size="6.4" fill="#777777" text-anchor="end" textLength="22.00" lengthAdjust="spacingAndGlyphs" >cpu.user</text>
<text x="869.70" y="406.00" font-size="6.4" fill="#777777" text-anchor="end" textLength="19.50" lengthAdjust="spacingAndGlyphs" >cpu.idle</text>
<rect x="2.00" y="559.90" width="873.00" height="1.10" fill="#ebebeb" />
<rect x="2.00" y="409.30" width="873.00" height="12.55" fill="#ebebeb" />
<line x1="2.00" y1="421.85" x2="875.00" y2="421.85" stroke="#dcdcdc" stroke-width="0.4" />
<text x="12.30" y="418.20" font-size="6.6" fill="#8aa3ba" textLength="55.30" lengthAdjust="spacingAndGlyphs" >2018-08-09 22:00:00</text>
<text x="309.40" y="418.20" font-size="6.6" fill="#8aa3ba" text-anchor="end" textLength="55.76" lengthAdjust="spacingAndGlyphs" >27.78028264302647</text>
<text x="468.40" y="418.20" font-size="6.6" fill="#8aa3ba" text-anchor="end" textLength="59.14" lengthAdjust="spacingAndGlyphs" >27.780282644999982</text>
<text x="601.40" y="418.20" font-size="6.6" fill="#8aa3ba" text-anchor="end" textLength="55.76" lengthAdjust="spacingAndGlyphs" >8.817760544521407</text>
<text x="736.40" y="418.20" font-size="6.6" fill="#8aa3ba" text-anchor="end" textLength="59.14" lengthAdjust="spacingAndGlyphs" >18.962522098505044</text>
<text x="869.50" y="418.20" font-size="6.6" fill="#8aa3ba" text-anchor="end" textLength="55.76" lengthAdjust="spacingAndGlyphs" >72.21971735697353</text>
<rect x="2.00" y="421.85" width="873.00" height="12.55" fill="#e3e3e3" />
<line x1="2.00" y1="434.40" x2="875.00" y2="434.40" stroke="#dcdcdc" stroke-width="0.4" />
<text x="12.30" y="430.75" font-size="6.6" fill="#8aa3ba" textLength="55.30" lengthAdjust="spacingAndGlyphs" >2018-08-09 22:10:00</text>
<text x="309.40" y="430.75" font-size="6.6" fill="#8aa3ba" text-anchor="end" textLength="55.76" lengthAdjust="spacingAndGlyphs" >21.14660387657152</text>
<text x="468.40" y="430.75" font-size="6.6" fill="#8aa3ba" text-anchor="end" textLength="55.76" lengthAdjust="spacingAndGlyphs" >21.14660389000001</text>
<text x="601.40" y="430.75" font-size="6.6" fill="#8aa3ba" text-anchor="end" textLength="55.76" lengthAdjust="spacingAndGlyphs" >6.208788054836613</text>
<text x="736.40" y="430.75" font-size="6.6" fill="#8aa3ba" text-anchor="end" textLength="55.76" lengthAdjust="spacingAndGlyphs" >14.93781582173489</text>
<text x="869.50" y="430.75" font-size="6.6" fill="#8aa3ba" text-anchor="end" textLength="55.76" lengthAdjust="spacingAndGlyphs" >78.85339612342847</text>
<rect x="2.00" y="434.40" width="873.00" height="12.55" fill="#ebebeb" />
<line x1="2.00" y1="446.95" x2="875.00" y2="446.95" stroke="#dcdcdc" stroke-width="0.4" />
<text x="12.30" y="443.30" font-size="6.6" fill="#8aa3ba" textLength="55.30" lengthAdjust="spacingAndGlyphs" >2018-08-09 22:20:00</text>
<text x="309.40" y="443.30" font-size="6.6" fill="#8aa3ba" text-anchor="end" textLength="59.14" lengthAdjust="spacingAndGlyphs" >21.985524825374953</text>
<text x="468.40" y="443.30" font-size="6.6" fill="#8aa3ba" text-anchor="end" textLength="55.76" lengthAdjust="spacingAndGlyphs" >21.98552480666667</text>
<text x="601.40" y="443.30" font-size="6.6" fill="#8aa3ba" text-anchor="end" textLength="52.37" lengthAdjust="spacingAndGlyphs" >6.58224617654932</text>
<text x="736.40" y="443.30" font-size="6.6" fill="#8aa3ba" text-anchor="end" textLength="59.14" lengthAdjust="spacingAndGlyphs" >15.404278648825647</text>
<text x="869.50" y="443.30" font-size="6.6" fill="#8aa3ba" text-anchor="end" textLength="55.76" lengthAdjust="spacingAndGlyphs" >78.01347517462507</text>
<rect x="2.00" y="446.95" width="873.00" height="12.55" fill="#e3e3e3" />
<line x1="2.00" y1="459.50" x2="875.00" y2="459.50" stroke="#dcdcdc" stroke-width="0.4" />
<text x="12.30" y="455.85" font-size="6.6" fill="#8aa3ba" textLength="55.30" lengthAdjust="spacingAndGlyphs" >2018-08-09 22:30:00</text>
<text x="309.40" y="455.85" font-size="6.6" fill="#8aa3ba" text-anchor="end" textLength="55.76" lengthAdjust="spacingAndGlyphs" >24.87065086974294</text>
<text x="468.40" y="455.85" font-size="6.6" fill="#8aa3ba" text-anchor="end" textLength="55.76" lengthAdjust="spacingAndGlyphs" >24.87065088833334</text>
<text x="601.40" y="455.85" font-size="6.6" fill="#8aa3ba" text-anchor="end" textLength="59.14" lengthAdjust="spacingAndGlyphs" >7.1160109126224595</text>
<text x="736.40" y="455.85" font-size="6.6" fill="#8aa3ba" text-anchor="end" textLength="59.14" lengthAdjust="spacingAndGlyphs" >17.754639957120492</text>
<text x="869.50" y="455.85" font-size="6.6" fill="#8aa3ba" text-anchor="end" textLength="55.76" lengthAdjust="spacingAndGlyphs" >75.12934913025704</text>
<rect x="2.00" y="459.50" width="873.00" height="12.55" fill="#ebebeb" />
<line x1="2.00" y1="472.05" x2="875.00" y2="472.05" stroke="#dcdcdc" stroke-width="0.4" />
<text x="12.30" y="468.40" font-size="6.6" fill="#8aa3ba" textLength="55.30" lengthAdjust="spacingAndGlyphs" >2018-08-09 22:40:00</text>
<text x="309.40" y="468.40" font-size="6.6" fill="#8aa3ba" text-anchor="end" textLength="55.76" lengthAdjust="spacingAndGlyphs" >20.89887236436058</text>
<text x="468.40" y="468.40" font-size="6.6" fill="#8aa3ba" text-anchor="end" textLength="55.76" lengthAdjust="spacingAndGlyphs" >20.89887234775374</text>
<text x="601.40" y="468.40" font-size="6.6" fill="#8aa3ba" text-anchor="end" textLength="55.76" lengthAdjust="spacingAndGlyphs" >6.206037800269688</text>
<text x="736.40" y="468.40" font-size="6.6" fill="#8aa3ba" text-anchor="end" textLength="59.14" lengthAdjust="spacingAndGlyphs" >14.692834564090886</text>
<text x="869.50" y="468.40" font-size="6.6" fill="#8aa3ba" text-anchor="end" textLength="55.76" lengthAdjust="spacingAndGlyphs" >79.10112763563946</text>
<rect x="2.00" y="472.05" width="873.00" height="12.55" fill="#e3e3e3" />
<line x1="2.00" y1="484.60" x2="875.00" y2="484.60" stroke="#dcdcdc" stroke-width="0.4" />
<text x="12.30" y="480.95" font-size="6.6" fill="#8aa3ba" textLength="55.30" lengthAdjust="spacingAndGlyphs" >2018-08-09 22:50:00</text>
<text x="309.40" y="480.95" font-size="6.6" fill="#8aa3ba" text-anchor="end" textLength="59.14" lengthAdjust="spacingAndGlyphs" >21.390445404584547</text>
<text x="468.40" y="480.95" font-size="6.6" fill="#8aa3ba" text-anchor="end" textLength="55.76" lengthAdjust="spacingAndGlyphs" >21.39044540499999</text>
<text x="601.40" y="480.95" font-size="6.6" fill="#8aa3ba" text-anchor="end" textLength="55.76" lengthAdjust="spacingAndGlyphs" >6.328106171585878</text>
<text x="736.40" y="480.95" font-size="6.6" fill="#8aa3ba" text-anchor="end" textLength="55.76" lengthAdjust="spacingAndGlyphs" >15.06233923299867</text>
<text x="869.50" y="480.95" font-size="6.6" fill="#8aa3ba" text-anchor="end" textLength="52.37" lengthAdjust="spacingAndGlyphs" >78.6095545954155</text>
<rect x="2.00" y="484.60" width="873.00" height="12.55" fill="#ebebeb" />
<line x1="2.00" y1="497.15" x2="875.00" y2="497.15" stroke="#dcdcdc" stroke-width="0.4" />
<text x="12.30" y="493.50" font-size="6.6" fill="#8aa3ba" textLength="55.30" lengthAdjust="spacingAndGlyphs" >2018-08-09 23:00:00</text>
<text x="309.40" y="493.50" font-size="6.6" fill="#8aa3ba" text-anchor="end" textLength="59.14" lengthAdjust="spacingAndGlyphs" >29.710652654709655</text>
<text x="468.40" y="493.50" font-size="6.6" fill="#8aa3ba" text-anchor="end" textLength="59.14" lengthAdjust="spacingAndGlyphs" >29.710652626666665</text>
<text x="601.40" y="493.50" font-size="6.6" fill="#8aa3ba" text-anchor="end" textLength="55.76" lengthAdjust="spacingAndGlyphs" >9.064270515205287</text>
<text x="736.40" y="493.50" font-size="6.6" fill="#8aa3ba" text-anchor="end" textLength="55.76" lengthAdjust="spacingAndGlyphs" >20.64638213950435</text>
<text x="869.50" y="493.50" font-size="6.6" fill="#8aa3ba" text-anchor="end" textLength="55.76" lengthAdjust="spacingAndGlyphs" >70.28934734529044</text>
<rect x="2.00" y="497.15" width="873.00" height="12.55" fill="#e3e3e3" />
<line x1="2.00" y1="509.70" x2="875.00" y2="509.70" stroke="#dcdcdc" stroke-width="0.4" />
<text x="12.30" y="506.05" font-size="6.6" fill="#8aa3ba" textLength="55.30" lengthAdjust="spacingAndGlyphs" >2018-08-09 23:10:00</text>
<text x="309.40" y="506.05" font-size="6.6" fill="#8aa3ba" text-anchor="end" textLength="59.14" lengthAdjust="spacingAndGlyphs" >21.079661445112162</text>
<text x="468.40" y="506.05" font-size="6.6" fill="#8aa3ba" text-anchor="end" textLength="55.76" lengthAdjust="spacingAndGlyphs" >21.07966143666666</text>
<text x="601.40" y="506.05" font-size="6.6" fill="#8aa3ba" text-anchor="end" textLength="55.76" lengthAdjust="spacingAndGlyphs" >6.196550393046528</text>
<text x="736.40" y="506.05" font-size="6.6" fill="#8aa3ba" text-anchor="end" textLength="59.14" lengthAdjust="spacingAndGlyphs" >14.883111052065647</text>
<text x="869.50" y="506.05" font-size="6.6" fill="#8aa3ba" text-anchor="end" textLength="55.76" lengthAdjust="spacingAndGlyphs" >78.92033855488775</text>
<rect x="2.00" y="509.70" width="873.00" height="12.55" fill="#ebebeb" />
<line x1="2.00" y1="522.25" x2="875.00" y2="522.25" stroke="#dcdcdc" stroke-width="0.4" />
<text x="12.30" y="518.60" font-size="6.6" fill="#8aa3ba" textLength="55.30" lengthAdjust="spacingAndGlyphs" >2018-08-09 23:20:00</text>
<text x="309.40" y="518.60" font-size="6.6" fill="#8aa3ba" text-anchor="end" textLength="52.37" lengthAdjust="spacingAndGlyphs" >21.8319097888268</text>
<text x="468.40" y="518.60" font-size="6.6" fill="#8aa3ba" text-anchor="end" textLength="59.14" lengthAdjust="spacingAndGlyphs" >21.831909761666658</text>
<text x="601.40" y="518.60" font-size="6.6" fill="#8aa3ba" text-anchor="end" textLength="52.37" lengthAdjust="spacingAndGlyphs" >6.57773368443094</text>
<text x="736.40" y="518.60" font-size="6.6" fill="#8aa3ba" text-anchor="end" textLength="55.76" lengthAdjust="spacingAndGlyphs" >15.25417610439588</text>
<text x="869.50" y="518.60" font-size="6.6" fill="#8aa3ba" text-anchor="end" textLength="55.76" lengthAdjust="spacingAndGlyphs" >78.16809021117325</text>
<rect x="2.00" y="522.25" width="873.00" height="12.55" fill="#e3e3e3" />
<line x1="2.00" y1="534.80" x2="875.00" y2="534.80" stroke="#dcdcdc" stroke-width="0.4" />
<text x="12.30" y="531.15" font-size="6.6" fill="#8aa3ba" textLength="55.30" lengthAdjust="spacingAndGlyphs" >2018-08-09 23:30:00</text>
<text x="309.40" y="531.15" font-size="6.6" fill="#8aa3ba" text-anchor="end" textLength="59.14" lengthAdjust="spacingAndGlyphs" >24.916638950726327</text>
<text x="468.40" y="531.15" font-size="6.6" fill="#8aa3ba" text-anchor="end" textLength="59.14" lengthAdjust="spacingAndGlyphs" >24.916638971666664</text>
<text x="601.40" y="531.15" font-size="6.6" fill="#8aa3ba" text-anchor="end" textLength="55.76" lengthAdjust="spacingAndGlyphs" >7.165600190129637</text>
<text x="736.40" y="531.15" font-size="6.6" fill="#8aa3ba" text-anchor="end" textLength="59.14" lengthAdjust="spacingAndGlyphs" >17.751038760596668</text>
<text x="869.50" y="531.15" font-size="6.6" fill="#8aa3ba" text-anchor="end" textLength="55.76" lengthAdjust="spacingAndGlyphs" >75.08336104927362</text>
<rect x="2.00" y="534.80" width="873.00" height="12.55" fill="#ebebeb" />
<line x1="2.00" y1="547.35" x2="875.00" y2="547.35" stroke="#dcdcdc" stroke-width="0.4" />
<text x="12.30" y="543.70" font-size="6.6" fill="#8aa3ba" textLength="55.30" lengthAdjust="spacingAndGlyphs" >2018-08-09 23:40:00</text>
<text x="309.40" y="543.70" font-size="6.6" fill="#8aa3ba" text-anchor="end" textLength="55.76" lengthAdjust="spacingAndGlyphs" >20.79073438470528</text>
<text x="468.40" y="543.70" font-size="6.6" fill="#8aa3ba" text-anchor="end" textLength="59.14" lengthAdjust="spacingAndGlyphs" >20.790734361666654</text>
<text x="601.40" y="543.70" font-size="6.6" fill="#8aa3ba" text-anchor="end" textLength="55.76" lengthAdjust="spacingAndGlyphs" >6.011092682797159</text>
<text x="736.40" y="543.70" font-size="6.6" fill="#8aa3ba" text-anchor="end" textLength="59.14" lengthAdjust="spacingAndGlyphs" >14.779641701908153</text>
<text x="869.50" y="543.70" font-size="6.6" fill="#8aa3ba" text-anchor="end" textLength="55.76" lengthAdjust="spacingAndGlyphs" >79.20926561529467</text>
<rect x="2.00" y="547.35" width="873.00" height="12.55" fill="#e3e3e3" />
<line x1="2.00" y1="559.90" x2="875.00" y2="559.90" stroke="#dcdcdc" stroke-width="0.4" />
<text x="12.30" y="556.25" font-size="6.6" fill="#8aa3ba" textLength="55.30" lengthAdjust="spacingAndGlyphs" >2018-08-09 23:50:00</text>
<text x="309.40" y="556.25" font-size="6.6" fill="#8aa3ba" text-anchor="end" textLength="59.14" lengthAdjust="spacingAndGlyphs" >21.108692780693327</text>
<text x="468.40" y="556.25" font-size="6.6" fill="#8aa3ba" text-anchor="end" textLength="59.14" lengthAdjust="spacingAndGlyphs" >21.108692794999996</text>
<text x="601.40" y="556.25" font-size="6.6" fill="#8aa3ba" text-anchor="end" textLength="55.76" lengthAdjust="spacingAndGlyphs" >6.139900496559103</text>
<text x="736.40" y="556.25" font-size="6.6" fill="#8aa3ba" text-anchor="end" textLength="59.14" lengthAdjust="spacingAndGlyphs" >14.968792284134167</text>
<text x="869.50" y="556.25" font-size="6.6" fill="#8aa3ba" text-anchor="end" textLength="55.76" lengthAdjust="spacingAndGlyphs" >78.89130721930668</text>
<line x1="874.50" y1="32.50" x2="874.50" y2="128.00" stroke="#dcdcdc" stroke-width="0.8" />
<rect x="0.00" y="0.00" width="1.00" height="561.00" fill="#e9e9e9" />
<rect x="1.00" y="0.00" width="1.00" height="561.00" fill="#9a9a9a" />
<rect x="1.00" y="0.00" width="1.00" height="43.00" fill="#9c5f4f" />
</svg></body></html>
